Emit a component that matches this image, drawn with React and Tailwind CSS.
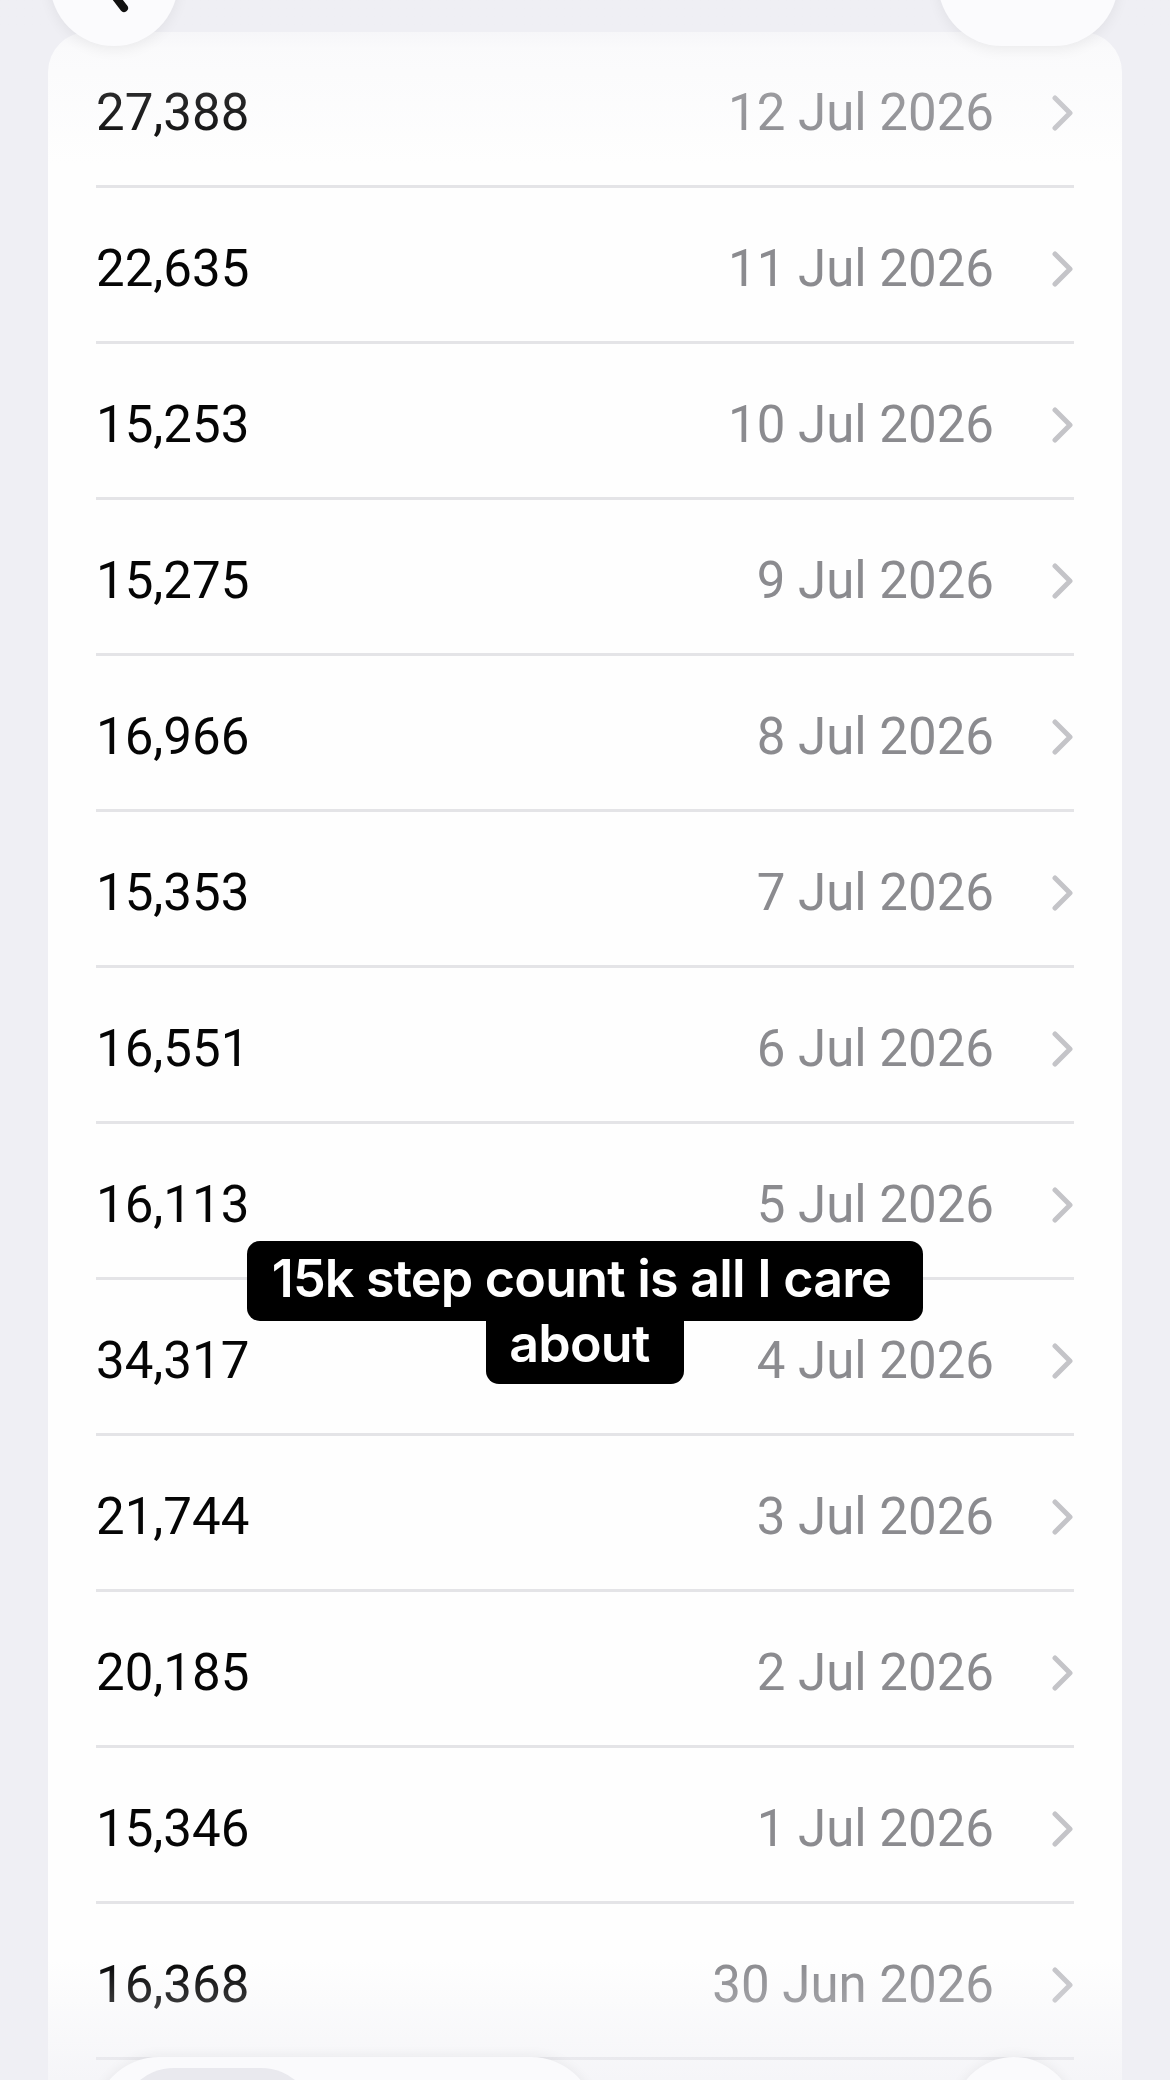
import React from "react";

const rows = [
  ["27,388", "12 Jul 2026"],
  ["22,635", "11 Jul 2026"],
  ["15,253", "10 Jul 2026"],
  ["15,275", "9 Jul 2026"],
  ["16,966", "8 Jul 2026"],
  ["15,353", "7 Jul 2026"],
  ["16,551", "6 Jul 2026"],
  ["16,113", "5 Jul 2026"],
  ["34,317", "4 Jul 2026"],
  ["21,744", "3 Jul 2026"],
  ["20,185", "2 Jul 2026"],
  ["15,346", "1 Jul 2026"],
  ["16,368", "30 Jun 2026"],
  ["18,402", "29 Jun 2026"],
];

const Chevron = () => (
  <svg width="22" height="36" viewBox="0 0 22 36" fill="none">
    <path
      d="M3 3 L18 18 L3 33"
      stroke="#c4c4c8"
      strokeWidth="5"
      strokeLinecap="round"
      strokeLinejoin="round"
    />
  </svg>
);

const Row = ({ steps, date }) => (
  <div className="flex flex-col">
    <div className="h-[153px] flex items-center justify-between pt-[9px]">
      <span className="text-[51px] text-[#050505]">{steps}</span>
      <div className="flex items-center gap-[58px]">
        <span className="text-[51px] text-[#8b8b8f]">{date}</span>
        <Chevron />
      </div>
    </div>
    <div className="h-[3px] bg-[#e4e4e7]" />
  </div>
);

const App = () => {
  return (
    <div
      className="relative w-[1170px] h-[2080px] overflow-hidden bg-[#efeff4]"
      style={{ fontFamily: "Roboto, 'Liberation Sans', sans-serif" }}
    >
      {/* list */}
      <div className="pt-[32px] px-[48px]">
        <div className="bg-[#fefefe] rounded-[40px] px-[48px]">
          {rows.map(([s, d]) => (
            <Row key={d} steps={s} date={d} />
          ))}
        </div>
      </div>

      {/* top fade */}
      <div className="absolute top-0 inset-x-0 h-[165px] bg-linear-to-b from-[#efeff4] via-[#efeff4]/25 via-30% to-transparent pointer-events-none" />

      {/* nav bar */}
      <div className="absolute top-0 inset-x-0 h-[50px]">
        <div className="absolute left-[50px] top-[-82px] w-[128px] h-[128px] rounded-full bg-[#fbfbfd] shadow-[0_4px_14px_rgba(0,0,0,0.06)]">
          <svg width="128" height="128" viewBox="0 0 128 128" fill="none">
            <path
              d="M74 38 L54 64 L74 90"
              stroke="#111"
              strokeWidth="8"
              strokeLinecap="round"
              strokeLinejoin="round"
            />
          </svg>
        </div>
        <div className="absolute left-[487px] top-[-46px] text-[48px] leading-none font-semibold text-[#66666b]">
          Show All Data
        </div>
        <div className="absolute left-[938px] top-[-82px] w-[180px] h-[128px] rounded-[64px] bg-[#fbfbfd] shadow-[0_4px_14px_rgba(0,0,0,0.06)]" />
      </div>

      {/* caption */}
      <div
        className="absolute inset-x-0 top-[1241px] flex flex-col items-center font-semibold text-white text-[52px] leading-[65px] tracking-[-0.015em]"
        style={{ fontFamily: "Inter, 'Liberation Sans', sans-serif" }}
      >
        <div className="bg-black rounded-[13px] pt-[5px] pb-[10px] pl-[25px] pr-[20px] whitespace-pre">
          {"15k step count is all I care "}
        </div>
        <div className="bg-black rounded-b-[13px] -mt-[10px] pb-[8px] pl-[23px] pr-[22px] whitespace-pre">
          {"about "}
        </div>
      </div>

      {/* bottom fade */}
      <div className="absolute bottom-0 inset-x-0 h-[120px] bg-linear-to-t from-[#efeff4]/60 to-transparent pointer-events-none" />

      {/* tab bar */}
      <div className="absolute top-[2057px] inset-x-0 flex">
        <div className="ml-[94px] w-[502px] h-[130px] rounded-full bg-[#fafafc] shadow-[0_-2px_12px_rgba(0,0,0,0.05)] pt-[11px] pl-[26px]">
          <div className="w-[195px] h-[108px] rounded-full bg-[#e9e9ee]" />
        </div>
        <div className="ml-auto mr-[95px] w-[122px] h-[122px] rounded-full bg-[#fafafc] shadow-[0_-2px_12px_rgba(0,0,0,0.05)]" />
      </div>
    </div>
  );
};

export default App;
